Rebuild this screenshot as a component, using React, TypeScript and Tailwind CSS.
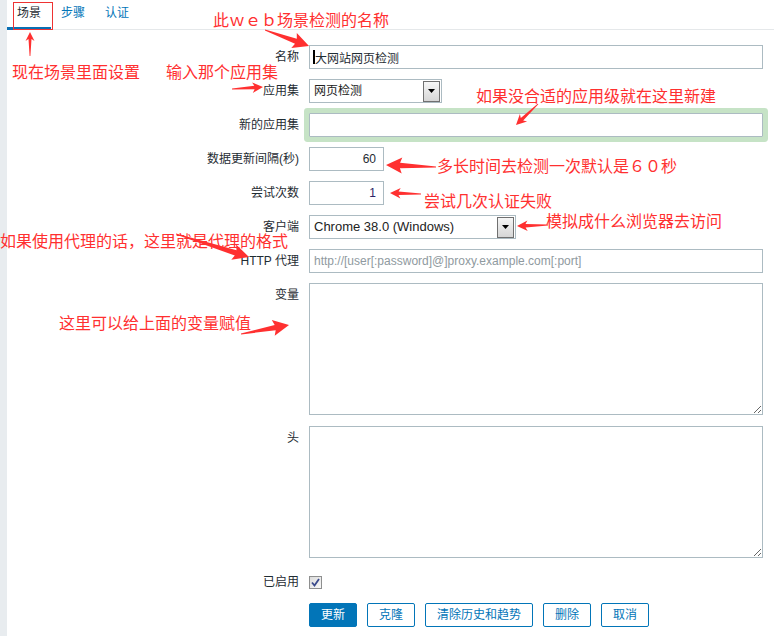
import React from 'react';

const RED = '#ff3030';

type Pt = { x1: number; y1: number; x2: number; y2: number };

// red tapered arrows as drawn by the screenshot tool
const arrows: Pt[] = [
  { x1: 265, y1: 30, x2: 309, y2: 46 },
  { x1: 232, y1: 89, x2: 263, y2: 87 },
  { x1: 30, y1: 56, x2: 30, y2: 32 },
  { x1: 538, y1: 104, x2: 516, y2: 125 },
  { x1: 436, y1: 167, x2: 386, y2: 165 },
  { x1: 421, y1: 194, x2: 390, y2: 193 },
  { x1: 548, y1: 225, x2: 517, y2: 226 },
  { x1: 176, y1: 234, x2: 249, y2: 257 },
  { x1: 241, y1: 334, x2: 289, y2: 325 },
];

const arrowPoints = ({ x1, y1, x2, y2 }: Pt) => {
  const dx = x2 - x1;
  const dy = y2 - y1;
  const len = Math.hypot(dx, dy);
  const ux = dx / len;
  const uy = dy / len;
  const nx = -uy;
  const ny = ux;
  const head = Math.max(9, Math.min(16, len * 0.34));
  const wing = head * 0.5;
  const shaft = head * 0.17;
  const bx = x2 - ux * head;
  const by = y2 - uy * head;
  const pts = [
    [x1 + nx * 0.4, y1 + ny * 0.4],
    [bx + ux * 2 + nx * shaft, by + uy * 2 + ny * shaft],
    [bx + nx * wing, by + ny * wing],
    [x2, y2],
    [bx - nx * wing, by - ny * wing],
    [bx + ux * 2 - nx * shaft, by + uy * 2 - ny * shaft],
    [x1 - nx * 0.4, y1 - ny * 0.4],
  ];
  return pts.map((p) => `${p[0].toFixed(1)},${p[1].toFixed(1)}`).join(' ');
};

const notes = [
  { text: '此ｗｅｂ场景检测的名称', cls: 'left-[213px] top-[10px]' },
  { text: '现在场景里面设置', cls: 'left-[12px] top-[62px]' },
  { text: '输入那个应用集', cls: 'left-[166px] top-[62px]' },
  { text: '如果没合适的应用级就在这里新建', cls: 'left-[476px] top-[86px]' },
  { text: '多长时间去检测一次默认是６０秒', cls: 'left-[437px] top-[156px]' },
  { text: '尝试几次认证失败', cls: 'left-[424px] top-[191px]' },
  { text: '模拟成什么浏览器去访问', cls: 'left-[546px] top-[211px]' },
  { text: '如果使用代理的话，这里就是代理的格式', cls: 'left-[0px] top-[231px]' },
  { text: '这里可以给上面的变量赋值', cls: 'left-[59px] top-[313px]' },
];

const Label = ({ children }: { children: React.ReactNode }) => (
  <div className="flex h-[24px] items-center justify-end whitespace-nowrap">{children}</div>
);

const inputCls =
  'h-[24px] border border-[#acbbc2] bg-white px-[4px] text-[12px] text-[#1f2c33] outline-none placeholder:text-[#8f9aa0]';

const FakeSelect = ({ value, width, big }: { value: string; width: string; big?: boolean }) => (
  <div className={`flex h-[24px] items-center border border-[#acbbc2] bg-white ${width}`}>
    <span className={`flex-1 pl-[4px] ${big ? 'text-[13px]' : 'text-[12px]'} text-[#222]`}>{value}</span>
    <span className="mr-[1px] flex h-[21px] w-[17px] items-center justify-center border border-[#707070] bg-gradient-to-b from-[#f6f6f6] to-[#d6d6d6]">
      <svg width="7" height="4" viewBox="0 0 7 4">
        <path d="M0 0h7L3.5 4z" fill="#000" />
      </svg>
    </span>
  </div>
);

const Button = ({ children, primary }: { children: React.ReactNode; primary?: boolean }) => (
  <button
    className={
      primary
        ? 'h-[24px] rounded-[2px] border border-[#0275b8] bg-[#0275b8] px-[11px] text-[12px] text-white'
        : 'h-[24px] rounded-[2px] border border-[#0275b8] bg-white px-[11px] text-[12px] text-[#0275b8]'
    }
  >
    {children}
  </button>
);

export default function App() {
  return (
    <div className="relative min-h-[636px] w-full overflow-hidden bg-white font-['Liberation_Sans','Noto_Sans_CJK_SC',sans-serif] text-[12px] text-[#1f2c33]">
      <div className="flex min-h-[636px]">
        <div className="w-[7px] shrink-0 bg-[#e8ecef]" />
        <div className="flex-1">
          {/* Tabs */}
          <div className="flex h-[30px] border-b border-[#e5e8ea]">
            <div className="-mb-px border-b-[3px] border-[#0a6fb3] px-[10px] leading-[27px]">场景</div>
            <div className="px-[10px] leading-[27px] text-[#0275b8]">步骤</div>
            <div className="px-[10px] leading-[27px] text-[#0275b8]">认证</div>
          </div>

          {/* Form */}
          <div className="grid grid-cols-[292px_1fr] gap-x-[10px] gap-y-[10px] pr-[11px] pt-[15px]">
            <Label>名称</Label>
            <div className="relative">
              <input
                readOnly
                value="大网站网页检测"
                className={`${inputCls} w-full border-[#1d62a0] pl-[5px]`}
              />
              <span className="absolute left-[4px] top-[5px] h-[14px] w-[2px] bg-black" />
            </div>

            <Label>应用集</Label>
            <FakeSelect value="网页检测" width="w-[133px]" />

            <Label>新的应用集</Label>
            <input readOnly className={`${inputCls} w-full rounded-[1px] shadow-[0_0_0_5px_#c6e3c6]`} />

            <Label>数据更新间隔(秒)</Label>
            <input readOnly value="60" className={`${inputCls} w-[75px] pr-[7px] text-right`} />

            <Label>尝试次数</Label>
            <input readOnly value="1" className={`${inputCls} w-[75px] pr-[7px] text-right text-[#2c2366]`} />

            <Label>客户端</Label>
            <FakeSelect value="Chrome 38.0 (Windows)" width="w-[207px]" big />

            <Label>HTTP 代理</Label>
            <input
              readOnly
              placeholder="http://[user[:password]@]proxy.example.com[:port]"
              className={`${inputCls} w-full`}
            />

            <Label>变量</Label>
            <textarea readOnly className="h-[132px] w-full border border-[#acbbc2] outline-none" />

            <div className="mt-[1px]">
              <Label>头</Label>
            </div>
            <textarea readOnly className="mt-[1px] h-[132px] w-full border border-[#acbbc2] outline-none" />

            <div className="mt-[2px]">
              <Label>已启用</Label>
            </div>
            <div className="mt-[2px] flex h-[24px] items-center">
              <span className="flex h-[13px] w-[13px] items-center justify-center border border-[#8e8f8f] bg-gradient-to-br from-[#dcdcdc] to-[#f8f8f8]">
                <svg width="9" height="9" viewBox="0 0 9 9">
                  <path d="M1 4.5 L3.5 7.5 L8 1" fill="none" stroke="#3a4a8c" strokeWidth="1.8" />
                </svg>
              </span>
            </div>

            <div />
            <div className="-mt-px flex gap-[10px]">
              <Button primary>更新</Button>
              <Button>克隆</Button>
              <Button>清除历史和趋势</Button>
              <Button>删除</Button>
              <Button>取消</Button>
            </div>
          </div>
        </div>
      </div>

      {/* Annotations drawn over the screenshot */}
      <div className="pointer-events-none absolute left-[13px] top-[2px] h-[28px] w-[40px] border border-[#ee3333]" />
      {notes.map((n) => (
        <span
          key={n.text}
          className={`pointer-events-none absolute whitespace-nowrap font-['Noto_Sans_CJK_SC',sans-serif] text-[16px] leading-[18px] text-[#ff3030] ${n.cls}`}
        >
          {n.text}
        </span>
      ))}
      <svg className="pointer-events-none absolute left-0 top-0" width="774" height="636">
        {arrows.map((a, i) => (
          <polygon key={i} points={arrowPoints(a)} fill={RED} />
        ))}
      </svg>
    </div>
  );
}
